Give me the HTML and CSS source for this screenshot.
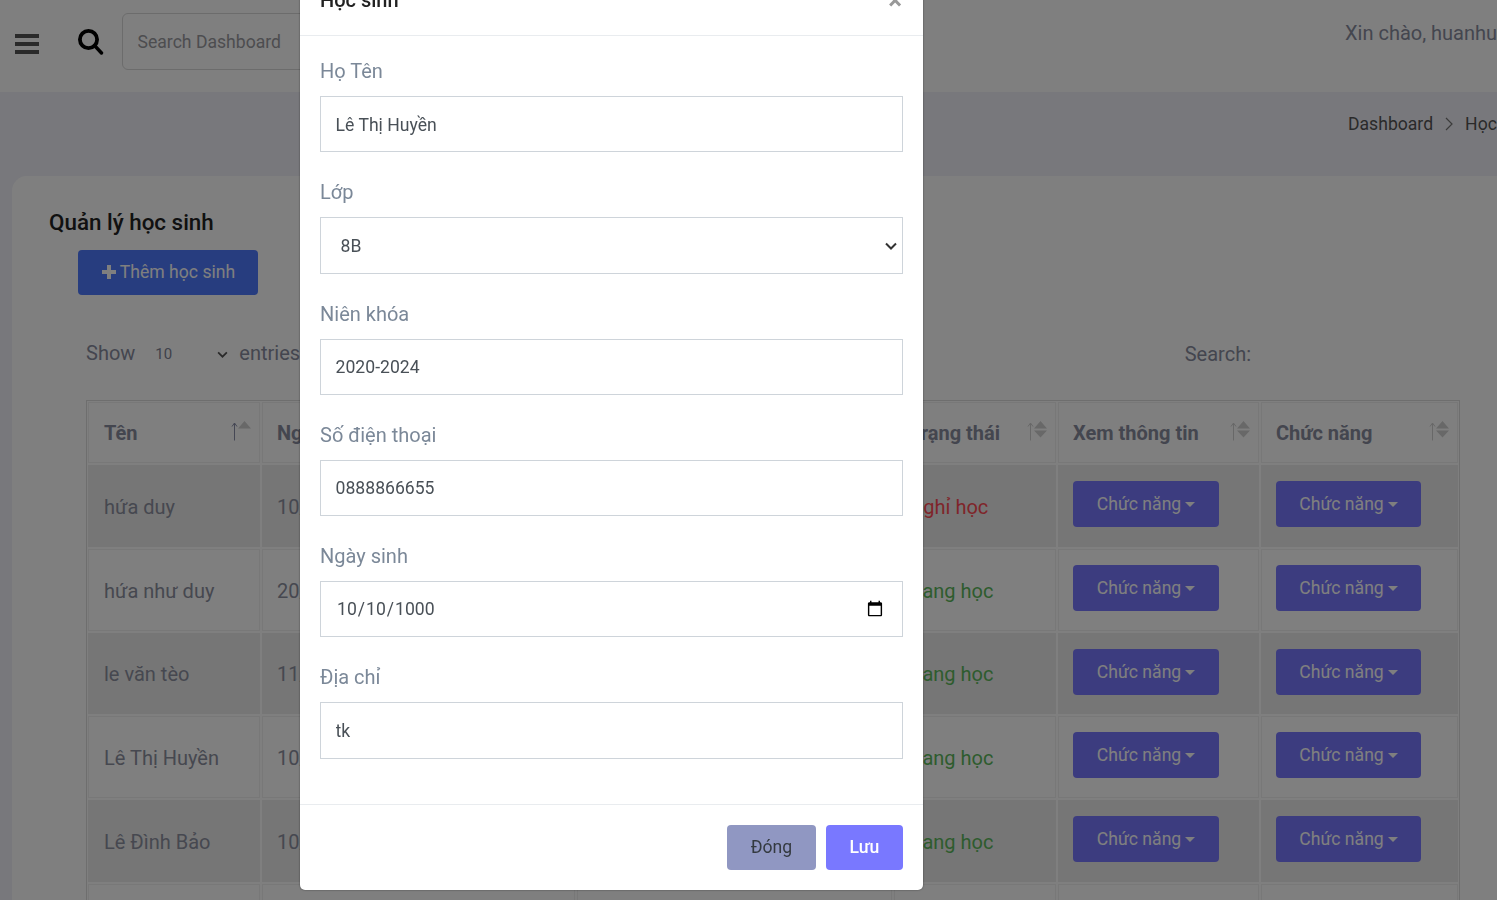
FILE: index.html
```html
<!doctype html>
<html>

<head>
  <meta charset="UTF-8" />
  <meta name="viewport" content="width=device-width, initial-scale=1.0" />
  <title>Quản lý học sinh</title>
  <link rel="stylesheet" href="styles.css">
</head>

<body>
  <nav class="navbar">
    <svg class="menu-icon" viewBox="0 0 24 20" width="24" height="20"><path d="M0 0h24v4H0zM0 8h24v4H0zM0 16h24v4H0z" fill="#555" /></svg>
    <svg class="search-icon" viewBox="0 0 26 26" width="26" height="26"><circle cx="10.500" cy="10.500" r="8.600" fill="none" stroke="#000" stroke-width="3.800" /><path d="M16.500 16.500l7 7.500" stroke="#000" stroke-width="3.400" stroke-linecap="round" /></svg>
    <input class="nav-search" placeholder="Search Dashboard" />
    <span class="greeting">Xin chào, huanhuynh</span>
  </nav>

  <div class="breadcrumb-bar">
    <span>Dashboard</span>
    <svg class="crumb-sep" viewBox="0 0 8 14" width="8" height="14"><path d="M1 1l6 6-6 6" fill="none" stroke="#777" stroke-width="1.200" /></svg>
    <span>Học sinh</span>
  </div>

  <main class="card">
    <h2 class="card-title">Quản lý học sinh</h2>
    <button class="btn btn-add">
      <svg viewBox="0 0 16 16" width="16" height="16"><path d="M6 1h4v5h5v4h-5v5H6v-5H1V6h5z" fill="#fff" /></svg>
      Thêm học sinh
    </button>

    <div class="table-tools">
      <label class="length-label">Show</label>
      <select class="length-select">
        <option>10</option>
      </select>
      <span>entries</span>
      <label class="search-label">Search:</label>
    </div>

    <table class="student-table">
      <colgroup>
        <col class="col-name">
        <col class="col-date">
        <col class="col-address">
        <col class="col-status">
        <col class="col-info">
        <col class="col-action">
      </colgroup>
      <thead>
        <tr>
          <th>Tên
            <svg class="sort-icon" viewBox="0 0 21 20" width="21" height="20"><path d="M3.500 19.500V2M1 5.500L3.500 2 6 5.500" fill="none" stroke="#8a8fa8" stroke-width="1" /><path d="M7 7.500L13.500 0 20 7.500z" fill="#d0d0d0" /></svg>
          </th>
          <th>Ngày sinh</th>
          <th>Địa chỉ</th>
          <th>Trạng thái
            <svg class="sort-icon" viewBox="0 0 21 20" width="21" height="20"><path d="M3.500 19.500V2M1 5.500L3.500 2 6 5.500" fill="none" stroke="#d0d0d0" stroke-width="1" /><path d="M7 7.500L13.500 0 20 7.500zM7 9.500h13l-6.500 7z" fill="#d0d0d0" /></svg>
          </th>
          <th>Xem thông tin
            <svg class="sort-icon" viewBox="0 0 21 20" width="21" height="20"><path d="M3.500 19.500V2M1 5.500L3.500 2 6 5.500" fill="none" stroke="#d0d0d0" stroke-width="1" /><path d="M7 7.500L13.500 0 20 7.500zM7 9.500h13l-6.500 7z" fill="#d0d0d0" /></svg>
          </th>
          <th>Chức năng
            <svg class="sort-icon" viewBox="0 0 21 20" width="21" height="20"><path d="M3.500 19.500V2M1 5.500L3.500 2 6 5.500" fill="none" stroke="#d0d0d0" stroke-width="1" /><path d="M7 7.500L13.500 0 20 7.500zM7 9.500h13l-6.500 7z" fill="#d0d0d0" /></svg>
          </th>
        </tr>
      </thead>
      <tbody>
        <tr>
          <td>hứa duy</td>
          <td>10/10/2000</td>
          <td>tk</td>
          <td class="status-off">Nghỉ học</td>
          <td class="cell-action"><button class="btn btn-action">Chức năng</button></td>
          <td class="cell-action"><button class="btn btn-action btn-narrow">Chức năng</button></td>
        </tr>
        <tr>
          <td>hứa như duy</td>
          <td>20/10/2000</td>
          <td>tk</td>
          <td class="status-on">Đang học</td>
          <td class="cell-action"><button class="btn btn-action">Chức năng</button></td>
          <td class="cell-action"><button class="btn btn-action btn-narrow">Chức năng</button></td>
        </tr>
        <tr>
          <td>le văn tèo</td>
          <td>11/10/2000</td>
          <td>tk</td>
          <td class="status-on">Đang học</td>
          <td class="cell-action"><button class="btn btn-action">Chức năng</button></td>
          <td class="cell-action"><button class="btn btn-action btn-narrow">Chức năng</button></td>
        </tr>
        <tr>
          <td>Lê Thị Huyền</td>
          <td>10/10/1000</td>
          <td>tk</td>
          <td class="status-on">Đang học</td>
          <td class="cell-action"><button class="btn btn-action">Chức năng</button></td>
          <td class="cell-action"><button class="btn btn-action btn-narrow">Chức năng</button></td>
        </tr>
        <tr>
          <td>Lê Đình Bảo</td>
          <td>10/10/2000</td>
          <td>tk</td>
          <td class="status-on">Đang học</td>
          <td class="cell-action"><button class="btn btn-action">Chức năng</button></td>
          <td class="cell-action"><button class="btn btn-action btn-narrow">Chức năng</button></td>
        </tr>
        <tr>
          <td></td>
          <td></td>
          <td></td>
          <td></td>
          <td></td>
          <td></td>
        </tr>
      </tbody>
    </table>
  </main>

  <div class="backdrop"></div>

  <div class="modal-wrap">
    <div class="modal">
      <div class="modal-header">
        <h5>Học sinh</h5>
        <span class="modal-close">×</span>
      </div>
      <form class="modal-body">
        <div class="form-group">
          <label>Họ Tên</label>
          <input class="form-control" value="Lê Thị Huyền" />
        </div>
        <div class="form-group">
          <label>Lớp</label>
          <select class="form-control form-select">
            <option>8B</option>
          </select>
        </div>
        <div class="form-group">
          <label>Niên khóa</label>
          <input class="form-control" value="2020-2024" />
        </div>
        <div class="form-group">
          <label>Số điện thoại</label>
          <input class="form-control" value="0888866655" />
        </div>
        <div class="form-group">
          <label>Ngày sinh</label>
          <input class="form-control form-date" type="date" value="1000-10-10" />
        </div>
        <div class="form-group">
          <label>Địa chỉ</label>
          <input class="form-control" value="tk" />
        </div>
      </form>
      <div class="modal-footer">
        <button class="btn btn-close">Đóng</button>
        <button class="btn btn-save">Lưu</button>
      </div>
    </div>
  </div>
</body>

</html>
```

FILE: styles.css
```css
* {
  box-sizing: border-box;
}

html,
body {
  height: 100%;
}

body {
  margin: 0;
  overflow: hidden;
  background-color: #f1f1f8;
  color: #888c9e;
  font-family: Roboto, "Liberation Sans", sans-serif;
  font-size: 20px;
}

.navbar {
  display: flex;
  align-items: center;
  height: 92px;
  padding-left: 15px;
  background-color: white;
  white-space: nowrap;
}

.menu-icon {
  flex: none;
  margin-top: -4px;
}

.search-icon {
  flex: none;
  margin-left: 39px;
  margin-top: -8px;
}

.nav-search {
  flex: none;
  width: 250px;
  height: 57px;
  margin-left: 18px;
  margin-top: -9px;
  padding-left: 14.5px;
  border: 1px solid #d8d8d8;
  border-radius: 6px;
  background: transparent;
  font: 17.6px Roboto, sans-serif;
}

.nav-search::placeholder {
  color: #9a9a9f;
}

.greeting {
  margin-left: 973px;
  margin-top: -27px;
}

.breadcrumb-bar {
  display: flex;
  align-items: center;
  gap: 12px;
  height: 84px;
  padding-left: 1348px;
  padding-bottom: 21px;
  font-size: 17.6px;
  color: #555;
  white-space: nowrap;
}

.crumb-sep {
  flex: none;
}

.card {
  width: 1500px;
  margin-left: 12px;
  padding: 32px 37px 0;
  background-color: white;
  border-radius: 15px;
}

.card-title {
  margin: 0;
  height: 42px;
  font-size: 22.4px;
  line-height: 28px;
  font-weight: 500;
  color: #222;
}

.btn {
  display: inline-block;
  border: none;
  border-radius: 4px;
  color: white;
  font: 17.6px Roboto, sans-serif;
}

.btn-add {
  display: flex;
  align-items: center;
  justify-content: center;
  gap: 3px;
  width: 180px;
  height: 45px;
  margin-left: 29px;
  padding-bottom: 2px;
  background-color: #4f7bff;
}

.table-tools {
  display: flex;
  align-items: center;
  width: 1374px;
  height: 44px;
  margin: 36px 0 25px 37px;
  white-space: nowrap;
}

.length-select {
  width: 95px;
  height: 30px;
  margin: 2px 4px 0 5px;
  padding-left: 15px;
  border: none;
  appearance: none;
  background: transparent url("data:image/svg+xml,%3Csvg xmlns='http://www.w3.org/2000/svg' viewBox='0 0 12 8'%3E%3Cpath d='M1 1.500l5 5 5-5' fill='none' stroke='%23555' stroke-width='2'/%3E%3C/svg%3E") no-repeat right 7px center / 11px 7px;
  color: #7f8396;
  font: 15px Roboto, sans-serif;
}

.search-label {
  margin-left: auto;
  margin-right: 209px;
  padding-top: 2px;
}

.student-table {
  width: 1374px;
  margin-left: 37px;
  table-layout: fixed;
  box-shadow: inset 0 0 0 1px #dcdcdc;
  border-spacing: 2px;
  color: #8d90a0;
}

.col-name {
  width: 172px;
}

.col-date {
  width: 313px;
}

.col-address {
  width: 315px;
}

.col-status {
  width: 162px;
}

.col-info {
  width: 201px;
}

th,
td {
  position: relative;
  padding: 0 14px;
  border: 1px solid #f0f0f0;
  text-align: start;
}

th:first-child,
td:first-child {
  padding-left: 15px;
}

th {
  height: 61px;
  font-weight: 700;
  color: #888c9e;
}

td {
  height: 81.75px;
  padding-top: 2px;
}

tbody>tr:nth-child(odd)>td {
  background-color: #ececec;
  border-color: #ececec;
}

.cell-action {
  padding-top: 0;
  padding-bottom: 3.5px;
}

.sort-icon {
  position: absolute;
  right: 7px;
  top: 18px;
}

.status-off {
  color: #ff4b55;
}

.status-on {
  color: #5cb85c;
}

.btn-action {
  width: 146px;
  height: 46px;
  background-color: #7978ff;
}

.btn-narrow {
  width: 145px;
}

.btn-action::after {
  content: "";
  display: inline-block;
  margin-left: 4px;
  vertical-align: 3px;
  border-top: 5px solid;
  border-left: 5px solid transparent;
  border-right: 5px solid transparent;
}

.backdrop {
  position: fixed;
  inset: 0;
  background-color: rgba(0, 0, 0, 0.5);
}

.modal-wrap {
  position: fixed;
  inset: 0;
  display: flex;
  align-items: flex-end;
  padding-bottom: 10.5px;
  padding-left: 300px;
}

.modal {
  width: 623px;
  flex: none;
  background-color: white;
  border-radius: 5px;
  box-shadow: 0 0 2px rgba(0, 0, 0, 0.5);
}

.modal-header {
  display: flex;
  align-items: center;
  justify-content: space-between;
  padding: 20px;
  border-bottom: 1px solid #e9ecef;
}

.modal-header h5 {
  margin: 0;
  font-size: 20px;
  line-height: 30px;
  font-weight: 500;
  color: #222;
}

.modal-close {
  margin-right: 1px;
  font-size: 26px;
  font-weight: 700;
  line-height: 30px;
  color: #999;
}

.modal-body {
  padding: 20px;
}

.form-group {
  margin-bottom: 24.85px;
}

.form-group label {
  display: block;
  margin-bottom: 10px;
  line-height: 30px;
  color: #7b8898;
}

.form-control {
  display: block;
  width: 100%;
  height: 56.4px;
  padding: 1px 14.6px 0;
  border: 1px solid #ced4da;
  background-color: white;
  color: #495057;
  font: 17.6px Roboto, sans-serif;
  border-radius: 0;
}

.form-select {
  appearance: none;
  padding-top: 0;
  padding-left: 19.5px;
  background: white url("data:image/svg+xml,%3Csvg xmlns='http://www.w3.org/2000/svg' viewBox='0 0 12 8'%3E%3Cpath d='M1 1.500l5 5 5-5' fill='none' stroke='%23333' stroke-width='2'/%3E%3C/svg%3E") no-repeat right 5px center / 12px 8px;
}

.form-date {
  padding-top: 0;
  padding-left: 15px;
  padding-right: 16px;
}

.modal-footer {
  display: flex;
  justify-content: flex-end;
  gap: 10px;
  padding: 20px;
  border-top: 1px solid #e9ecef;
}

.btn-close {
  width: 89px;
  height: 45px;
  background-color: #9097c2;
  color: #343a40;
}

.btn-save {
  width: 77px;
  height: 45px;
  background-color: #7978ff;
  font-weight: 500;
}
```
